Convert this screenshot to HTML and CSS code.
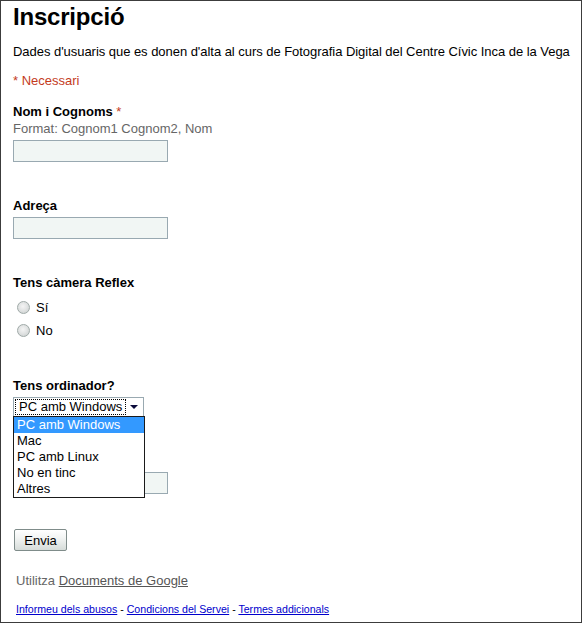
FILE: index.html
```html
<!DOCTYPE html>
<html lang="ca">
<head>
<meta charset="utf-8">
<title>Inscripció</title>
<link rel="stylesheet" href="styles.css">
</head>
<body>
<div class="frame">
  <h1 class="title">Inscripció</h1>
  <p class="desc">Dades d'usuaris que es donen d'alta al curs de Fotografia Digital del Centre Cívic Inca de la Vega</p>
  <p class="req">* Necessari</p>

  <div class="field">
    <div class="label">Nom i Cognoms <span class="star">*</span></div>
    <div class="help">Format: Cognom1 Cognom2, Nom</div>
    <input class="text" type="text">
  </div>

  <div class="field">
    <div class="label">Adreça</div>
    <input class="text" type="text">
  </div>

  <div class="field field-radio">
    <div class="label">Tens càmera Reflex</div>
    <ul class="radios">
      <li class="radio-row"><input class="radio" type="radio" name="reflex"><span>Sí</span></li>
      <li class="radio-row"><input class="radio" type="radio" name="reflex"><span>No</span></li>
    </ul>
  </div>

  <div class="field">
    <div class="label">Tens ordinador?</div>
    <div class="select">
      <div class="select-box">
        <span class="select-value">PC amb Windows</span>
        <span class="select-arrow"></span>
      </div>
      <ul class="options">
        <li class="option active">PC amb Windows</li>
        <li class="option">Mac</li>
        <li class="option">PC amb Linux</li>
        <li class="option">No en tinc</li>
        <li class="option">Altres</li>
      </ul>
    </div>
  </div>

  <div class="field">
    <div class="label-spacer"></div>
    <input class="text" type="text">
  </div>

  <button class="submit" type="button">Envia</button>

  <p class="powered">Utilitza <a href="#">Documents de Google</a></p>
  <p class="footer"><a href="#">Informeu dels abusos</a> - <a href="#">Condicions del Servei</a> - <a href="#">Termes addicionals</a></p>
</div>
</body>
</html>
```

FILE: styles.css
```css
html, body {
  margin: 0;
  padding: 0;
  background: #fff;
}

.frame {
  box-sizing: border-box;
  width: 582px;
  height: 623px;
  border: 1px solid #3c3c3c;
  padding: 0 12px;
  font-family: "Liberation Sans", Arial, sans-serif;
  font-size: 13px;
  color: #000;
  overflow: hidden;
}

.title {
  margin: 2px 0 0;
  font-size: 24px;
  line-height: 28px;
  font-weight: bold;
  letter-spacing: -0.2px;
}

.desc {
  margin: 13px 0 0;
  line-height: 16px;
  white-space: nowrap;
  letter-spacing: -0.04px;
}

.req {
  margin: 13px 0 0;
  line-height: 16px;
  color: #c43b1d;
}

.field {
  margin-top: 36px;
}

.req + .field {
  margin-top: 15px;
}

.label {
  font-weight: bold;
  line-height: 16px;
}

.label-spacer {
  height: 16px;
}

.star {
  color: #c43b1d;
  font-weight: normal;
}

.help {
  margin-top: 1px;
  line-height: 16px;
  color: #666;
}

.text {
  display: block;
  box-sizing: border-box;
  width: 155px;
  height: 22px;
  margin: 3px 0 0;
  padding: 2px;
  border: 1px solid #99a9b1;
  background: #f1f6f4;
  font: inherit;
}

.radios {
  list-style: none;
  margin: 5px 0 0;
  padding: 0;
}

.radio-row {
  display: flex;
  align-items: center;
  height: 23px;
  padding-left: 4px;
  gap: 6px;
}

.radio {
  appearance: none;
  -webkit-appearance: none;
  box-sizing: border-box;
  width: 13px;
  height: 13px;
  margin: 0;
  border: 1px solid #a0aaa8;
  border-radius: 50%;
  background: radial-gradient(circle at 45% 40%, #f4f4f4 0%, #e2e4e4 45%, #c7cccb 100%);
}

.select {
  position: relative;
  width: 131px;
  margin-top: 3px;
}

.select-box {
  box-sizing: border-box;
  display: flex;
  align-items: center;
  height: 20px;
  border: 1px solid #99a9b1;
  background: #fff;
  padding: 1px;
}

.select-value {
  flex: 1;
  height: 16px;
  line-height: 14px;
  padding-left: 3px;
  border: 1px dotted #000;
  box-sizing: border-box;
  white-space: nowrap;
}

.select-arrow {
  width: 16px;
  height: 16px;
  position: relative;
}

.select-arrow::after {
  content: "";
  position: absolute;
  left: 4px;
  top: 6px;
  border-left: 4px solid transparent;
  border-right: 4px solid transparent;
  border-top: 4px solid #0a0a3a;
}

.options {
  position: absolute;
  left: 0;
  top: 19px;
  width: 132px;
  box-sizing: border-box;
  margin: 0;
  padding: 0;
  list-style: none;
  border: 1px solid #1a1a1a;
  background: #fff;
  z-index: 2;
}

.option {
  height: 16px;
  line-height: 16px;
  padding-left: 3px;
  white-space: nowrap;
}

.option.active {
  background: #3399ff;
  color: #fff;
}

.submit {
  display: block;
  box-sizing: border-box;
  width: 53px;
  height: 22px;
  margin: 35px 0 0 1px;
  padding: 0;
  border: 1px solid #7f8c8a;
  border-radius: 2px;
  background: linear-gradient(#ffffff, #f2f4f3 40%, #d6dcd9);
  font: inherit;
  color: #000;
}

.powered {
  margin: 22px 0 0 3px;
  line-height: 16px;
  color: #666;
}

.powered a {
  color: #555;
  text-decoration: underline;
}

.footer {
  margin: 14px 0 0 3px;
  font-size: 10.6px;
  line-height: 13px;
  white-space: nowrap;
}

.footer a {
  color: #0000cc;
  text-decoration: underline;
}
```
